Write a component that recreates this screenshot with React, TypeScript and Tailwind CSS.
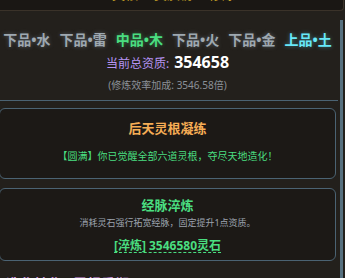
import React from 'react';

const ROOTS = [
  { name: '下品•水', cls: 'text-[#9ea8b0] [text-shadow:0_0_4px_rgba(148,163,184,0.45)]' },
  { name: '下品•雷', cls: 'text-[#9ea8b0] [text-shadow:0_0_4px_rgba(148,163,184,0.45)]' },
  { name: '中品•木', cls: 'text-[#4ade80] [text-shadow:0_0_4px_rgba(74,222,128,0.45)]' },
  { name: '下品•火', cls: 'text-[#9ea8b0] [text-shadow:0_0_4px_rgba(148,163,184,0.45)]' },
  { name: '下品•金', cls: 'text-[#9ea8b0] [text-shadow:0_0_4px_rgba(148,163,184,0.45)]' },
  { name: '上品•土', cls: 'text-[#67e8f9] [text-shadow:0_0_4px_rgba(103,232,249,0.45)]' },
];

export default function App() {
  return (
    <div className="w-[345px] h-[278px] overflow-hidden bg-[#23201c] font-['Noto_Sans','Noto_Sans_CJK_SC',sans-serif]">
      {/* top bar, mostly scrolled out of view */}
      <div className="w-[344px] h-[11px] overflow-hidden bg-[#1a1714] border-b border-r border-[#3a3229] rounded-br-[4px]">
        <div className="-mt-[13px] flex justify-center gap-[16px] pl-[4px] text-[13px] leading-[15px] text-[#c9a227]">
          <span>灵根</span>
          <span>资质榜</span>
          <span>修炼</span>
        </div>
      </div>

      <div className="flex">
        <div className="w-[341px] -ml-[3px] shrink-0">
          {/* spiritual roots summary */}
          <div className="pt-[19px] flex flex-col items-center">
            <div className="flex gap-[9px] text-[14px] leading-[20px] font-bold whitespace-nowrap">
              {ROOTS.map(r => (
                <span key={r.name} className={r.cls}>{r.name}</span>
              ))}
            </div>
            <div className="mt-[1px] flex items-baseline leading-[22px]">
              <span className="text-[12px] text-[#b794f4]">当前总资质:</span>
              <span className="ml-[5px] text-[16px] font-bold text-white">354658</span>
            </div>
            <div className="mt-[3px] text-[10px] leading-[14px] text-[#8b9098]">(修炼效率加成: 3546.58倍)</div>
          </div>

          {/* cards */}
          <div className="mt-[8px] border-t border-[#4b6373] pt-[7px] px-[2px]">
            <div className="rounded-[6px] border border-[#4b6373] bg-[#1c1916] pt-[10px] pb-[15px] flex flex-col items-center">
              <div className="text-[13px] leading-[18px] font-bold text-[#f6ad55]">后天灵根凝练</div>
              <div className="mt-[12px] text-[10px] leading-[14px] text-[#4ade80]">【圆满】你已觉醒全部六道灵根，夺尽天地造化！</div>
            </div>

            <div className="mt-[9px] rounded-[6px] border border-[#4b6373] bg-[#1c1916] pt-[7px] pb-[7px] flex flex-col items-center">
              <div className="text-[13px] leading-[18px] font-bold text-[#4ade80]">经脉淬炼</div>
              <div className="mt-[3px] text-[9px] leading-[12px] text-[#9ca3af]">消耗灵石强行拓宽经脉，固定提升1点资质。</div>
              <button className="mt-[10px] text-[12px] leading-[13px] font-bold text-[#4ade80] border-b border-dashed border-[#4ade80]">
                [淬炼] 3546580灵石
              </button>
            </div>

            <div className="mt-[13px] pl-[7px] text-[14px] leading-[20px] font-bold text-[#d39be6]">造化转化 · 灵根重塑</div>
          </div>
        </div>

        {/* scrollbar */}
        <div className="ml-[2px] mt-[9px] w-[3px] h-[300px] bg-[#56707f] shrink-0" />
      </div>
    </div>
  );
}
